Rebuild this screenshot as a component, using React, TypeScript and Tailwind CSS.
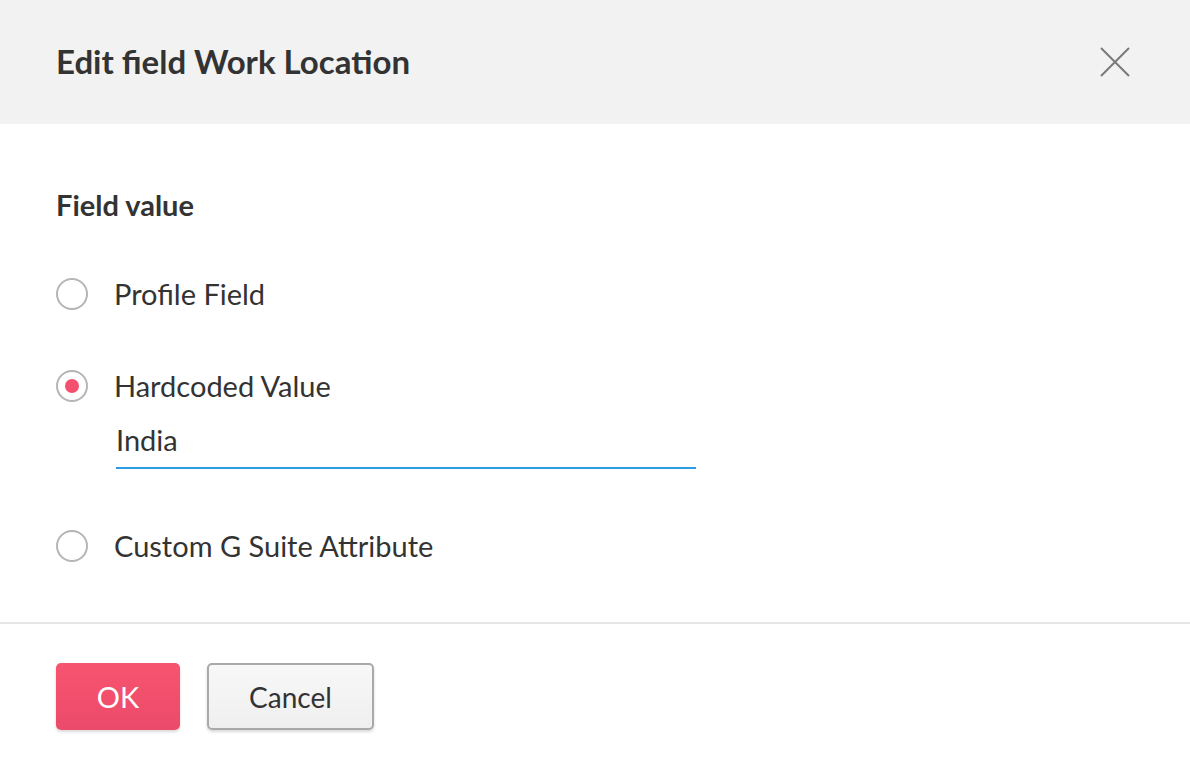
import React, { useState } from 'react';

type Option = 'profile' | 'hardcoded' | 'custom';

function Radio({ checked }: { checked: boolean }) {
  return (
    <span className="flex h-[32px] w-[32px] shrink-0 items-center justify-center rounded-full border-2 border-[#b5b5b5] bg-white">
      {checked && <span className="h-[14px] w-[14px] rounded-full bg-[#f34f6e]" />}
    </span>
  );
}

export default function App() {
  const [selected, setSelected] = useState<Option>('hardcoded');
  const [value, setValue] = useState('India');

  return (
    <div className="h-[768px] w-[1190px] bg-white text-[#333] font-['Lato',sans-serif]">
      {/* Header */}
      <div className="flex h-[124px] items-center justify-between bg-[#f2f2f2] pl-[56px] pr-[59px]">
        <h1 className="text-[33px] font-bold text-[#333]">Edit field Work Location</h1>
        <button className="text-[#7a7a7a]">
          <svg width="32" height="32" viewBox="0 0 32 32" fill="none" stroke="currentColor" strokeWidth="2">
            <path d="M2 2 L30 30 M30 2 L2 30" />
          </svg>
        </button>
      </div>

      {/* Body */}
      <div className="px-[56px] pt-[66px] pb-[58px]">
        <div className="text-[29px] font-bold leading-[30px]">Field value</div>

        <div className="mt-[56px] flex flex-col">
          <label className="flex cursor-pointer items-center gap-[26px]" onClick={() => setSelected('profile')}>
            <Radio checked={selected === 'profile'} />
            <span className="text-[29px] leading-[36px]">Profile Field</span>
          </label>

          <label className="mt-[56px] flex cursor-pointer items-center gap-[26px]" onClick={() => setSelected('hardcoded')}>
            <Radio checked={selected === 'hardcoded'} />
            <span className="text-[29px] leading-[36px]">Hardcoded Value</span>
          </label>

          <div className="ml-[60px] mt-[18px] w-[580px] border-b-2 border-[#2b9be3]">
            <input
              className="w-full bg-transparent pb-[9px] text-[29px] leading-[36px] text-[#333] outline-none"
              value={value}
              onChange={(e) => setValue(e.target.value)}
            />
          </div>

          <label className="mt-[59px] flex cursor-pointer items-center gap-[26px]" onClick={() => setSelected('custom')}>
            <Radio checked={selected === 'custom'} />
            <span className="text-[29px] leading-[36px]">Custom G Suite Attribute</span>
          </label>
        </div>
      </div>

      {/* Footer */}
      <div className="border-t-2 border-[#e6e6e6] px-[56px] pt-[39px]">
        <div className="flex gap-[27px]">
          <button className="h-[67px] w-[124px] rounded-[5px] bg-gradient-to-b from-[#f6546f] to-[#ec4a6a] text-[29px] text-white shadow-[0_2px_3px_rgba(0,0,0,0.15)]">
            OK
          </button>
          <button className="h-[67px] w-[167px] rounded-[5px] border-2 border-[#a9a9a9] bg-gradient-to-b from-[#f8f8f8] to-[#efefef] text-[28px] text-[#333] shadow-[0_2px_3px_rgba(0,0,0,0.15)]">
            Cancel
          </button>
        </div>
      </div>
    </div>
  );
}
